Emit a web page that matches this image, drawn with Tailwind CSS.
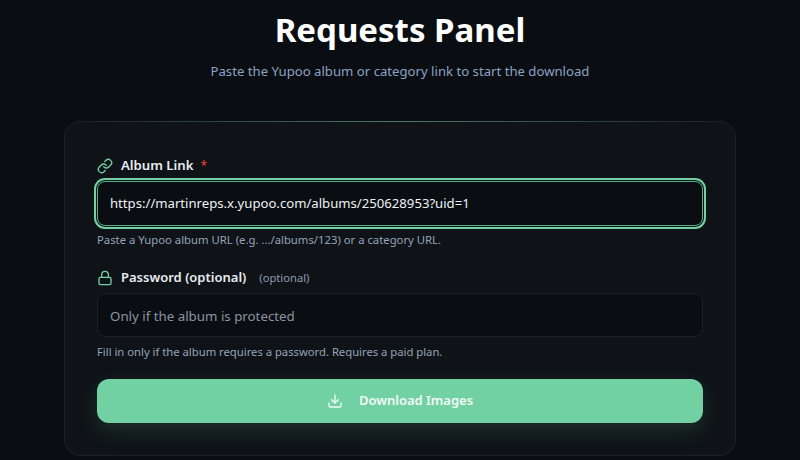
<!DOCTYPE html>
<html>
<head>
<meta charset="utf-8">
<script src="https://cdn.jsdelivr.net/npm/@tailwindcss/browser@4"></script>
</head>
<body class="bg-[#0a0d11] font-['Noto_Sans',sans-serif] overflow-hidden">
<div class="h-[460px] overflow-hidden flex flex-col items-center">
  <h1 class="mt-[8px] text-[33px] leading-[44px] font-bold text-white">Requests Panel</h1>
  <p class="mt-[7px] text-[13.17px] leading-[24px] text-[#8aa3c4]">Paste the Yupoo album or category link to start the download</p>
  <div class="relative mt-[38px] w-[672px] shrink-0 rounded-2xl border border-[#1c2128] bg-[#0f1317] p-8">
    <div class="absolute -top-px left-4 right-4 h-px bg-gradient-to-r from-transparent via-[#72d1a3]/50 to-transparent"></div>
    <label class="flex items-center h-[24px] text-[13.2px] font-semibold text-[#e8ecf1]">
      <svg class="w-4 h-4 mr-2 text-[#72d1a3]" viewBox="0 0 24 24" fill="none" stroke="currentColor" stroke-width="2" stroke-linecap="round" stroke-linejoin="round"><path d="M10 13a5 5 0 0 0 7.54.54l3-3a5 5 0 0 0-7.07-7.07l-1.72 1.71"/><path d="M14 11a5 5 0 0 0-7.54-.54l-3 3a5 5 0 0 0 7.07 7.07l1.71-1.71"/></svg>
      Album Link <span class="ml-[7px] text-[12px] text-[#d13a3a]">*</span>
    </label>
    <div class="mt-[3px] h-[45px] rounded-[8px] border border-[#5bab85] bg-[#0a0d11] px-3 flex items-center text-[13.15px] text-[#eef1f5] outline-2 outline-offset-1 outline-[#72d1a3]">https://martinreps.x.yupoo.com/albums/250628953?uid=1</div>
    <p class="mt-[5px] h-[18px] text-[11.3px] leading-[18px] text-[#94a3b8]">Paste a Yupoo album URL (e.g. .../albums/123) or a category URL.</p>
    <label class="mt-[18px] flex items-center h-[22px] text-[13px] font-semibold text-[#e8ecf1]">
      <svg class="w-4 h-4 mr-2 text-[#72d1a3]" viewBox="0 0 24 24" fill="none" stroke="currentColor" stroke-width="2" stroke-linecap="round" stroke-linejoin="round"><rect x="3" y="11" width="18" height="11" rx="2"/><path d="M7 11V7a5 5 0 0 1 10 0v4"/></svg>
      Password (optional) <span class="ml-[13px] text-[11.2px] font-normal text-[#8c9bb0]">(optional)</span>
    </label>
    <div class="mt-[4px] h-[44px] rounded-[8px] border border-[#1c2128] bg-[#0a0d11] px-3 pt-[4px] flex items-center text-[13.3px] text-[#8a95a3]">Only if the album is protected</div>
    <p class="mt-[6px] h-[18px] text-[11.26px] leading-[18px] text-[#94a3b8]">Fill in only if the album requires a password. Requires a paid plan.</p>
    <button class="mt-[18px] w-full h-[44px] rounded-xl bg-[#72d1a3] text-[#f2faf6] text-[13px] font-semibold flex items-center justify-center gap-4 shadow-[0_8px_20px_rgba(114,209,163,0.15)]">
      <svg class="w-4 h-4" viewBox="0 0 24 24" fill="none" stroke="currentColor" stroke-width="2" stroke-linecap="round" stroke-linejoin="round"><path d="M21 15v4a2 2 0 0 1-2 2H5a2 2 0 0 1-2-2v-4"/><path d="M7 10l5 5 5-5"/><path d="M12 15V3"/></svg>
      Download Images
    </button>
  </div>
</div>
</body>
</html>
